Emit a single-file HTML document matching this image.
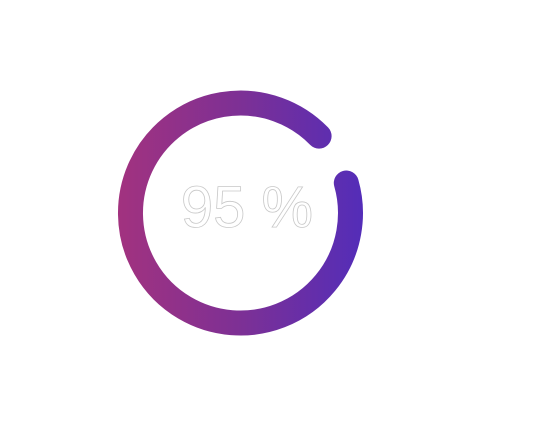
<!DOCTYPE html>
<html><head><style>html,body{margin:0;padding:0;background:#fff;width:559px;height:446px;overflow:hidden}</style></head>
<body>
<svg width="559" height="446" viewBox="0 0 559 446">
<defs>
<linearGradient id="g" x1="118" y1="0" x2="362" y2="0" gradientUnits="userSpaceOnUse">
<stop offset="0" stop-color="#a2327f"/>
<stop offset="0.5" stop-color="#7d3095"/>
<stop offset="1" stop-color="#542db8"/>
</linearGradient>
</defs>
<path d="M 346.3 183.0 A 110 110 0 1 1 319.1 136.1" fill="none" stroke="url(#g)" stroke-width="25" stroke-linecap="round"/>
<text x="247" y="227" text-anchor="middle" font-family="Liberation Sans, sans-serif" font-size="58" fill="none" stroke="#c8c8c8" stroke-width="0.8">95 %</text>
</svg>
</body></html>
